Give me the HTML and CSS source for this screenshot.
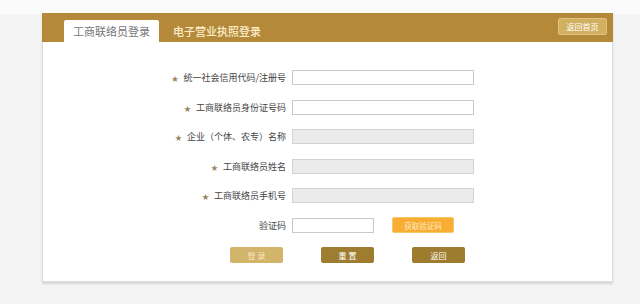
FILE: index.html
```html
<!DOCTYPE html>
<html lang="zh-CN">
<head>
  <meta charset="UTF-8" />
  <title>工商联络员登录</title>
  <link rel="stylesheet" href="styles.css">
</head>
<body>

  <div class="panel">
    <div class="panel-head">
      <div class="tab active">工商联络员登录</div>
      <div class="tab">电子营业执照登录</div>
      <button type="button" class="home-btn">返回首页</button>
    </div>

    <form class="login-form">
      <div class="row">
        <label><span class="star">★</span> 统一社会信用代码/注册号</label>
        <input type="text" />
      </div>
      <div class="row">
        <label><span class="star">★</span> 工商联络员身份证号码</label>
        <input type="text" />
      </div>
      <div class="row">
        <label><span class="star">★</span> 企业（个体、农专）名称</label>
        <input type="text" class="disabled" disabled />
      </div>
      <div class="row">
        <label><span class="star">★</span> 工商联络员姓名</label>
        <input type="text" class="disabled" disabled />
      </div>
      <div class="row">
        <label><span class="star">★</span> 工商联络员手机号</label>
        <input type="text" class="disabled" disabled />
      </div>
      <div class="row">
        <label>验证码</label>
        <input type="text" class="short" />
        <button type="button" class="code-btn">获取验证码</button>
      </div>

      <div class="actions">
        <button type="button" class="btn btn-login">登 录</button>
        <button type="button" class="btn btn-reset">重 置</button>
        <button type="button" class="btn btn-back">返回</button>
      </div>
    </form>
  </div>

</body>
</html>
```

FILE: styles.css
```css
body {
  margin: 0;
  font-family: "Noto Sans CJK SC", "Liberation Sans", sans-serif;
  background: linear-gradient(#fbfbfb 0, #fbfbfb 14px, #f4f4f4 14px);
  height: 304px;
  padding-top: 13px;
  box-sizing: border-box;
}

.panel {
  margin-left: 42px;
  width: 571px;
  height: 269px;
  background: #fff;
  border: 1px solid #dedede;
  border-top: none;
  box-sizing: border-box;
  box-shadow: 0 2px 2px rgba(0,0,0,0.12);
}

.panel-head {
  display: flex;
  align-items: flex-end;
  height: 29px;
  margin: 0 -1px;
  background: #b4893a;
  padding-left: 22px;
  position: relative;
}

.tab {
  font-size: 11px;
  line-height: 22px;
  height: 22px;
  padding: 0 9px;
  color: #fbeec9;
  font-weight: 500;
  margin-right: 5px;
}

.tab.active {
  background: #fff;
  color: #777;
  font-weight: normal;
  border-radius: 2px 2px 0 0;
}

.home-btn {
  position: absolute;
  right: 6px;
  top: 5px;
  width: 49px;
  height: 17px;
  padding: 0;
  font-family: inherit;
  font-size: 8px;
  color: #fff;
  background: #d2b062;
  border: 1px solid #e0c27c;
  border-radius: 2px;
}

.login-form {
  padding-top: 28px;
}

.row {
  display: flex;
  align-items: center;
  height: 15px;
  margin-bottom: 14.5px;
}

.row label {
  width: 243px;
  text-align: right;
  font-size: 9px;
  color: #444;
  padding-right: 6px;
  white-space: nowrap;
}

.star {
  color: #9a8560;
  font-size: 7px;
  margin-right: 3px;
}

.row input {
  width: 182px;
  height: 15px;
  box-sizing: border-box;
  border: 1px solid #c9c9c9;
  padding: 0;
  margin: 0;
  background: #fff;
}

.row input.disabled {
  background: #ebebeb;
  border-color: #d3d3d3;
}

.row input.short {
  width: 82px;
}

.code-btn {
  margin-left: 18px;
  width: 62px;
  height: 16px;
  padding: 0;
  font-family: inherit;
  font-size: 7.5px;
  color: #fde9c4;
  background: #f7ae33;
  border: 1px solid #fac568;
  border-radius: 2px;
}

.actions {
  display: flex;
  margin-top: 1px;
  padding-left: 187px;
}

.btn {
  width: 53px;
  height: 16px;
  padding: 0;
  font-family: inherit;
  font-size: 8px;
  color: #fff;
  border: none;
  border-radius: 2px;
  margin-right: 38px;
}

.btn-login {
  background: #d3b46b;
  color: #f4e6c0;
}

.btn-reset {
  background: #9e7d31;
}

.btn-back {
  background: #9d7b2f;
}
```
